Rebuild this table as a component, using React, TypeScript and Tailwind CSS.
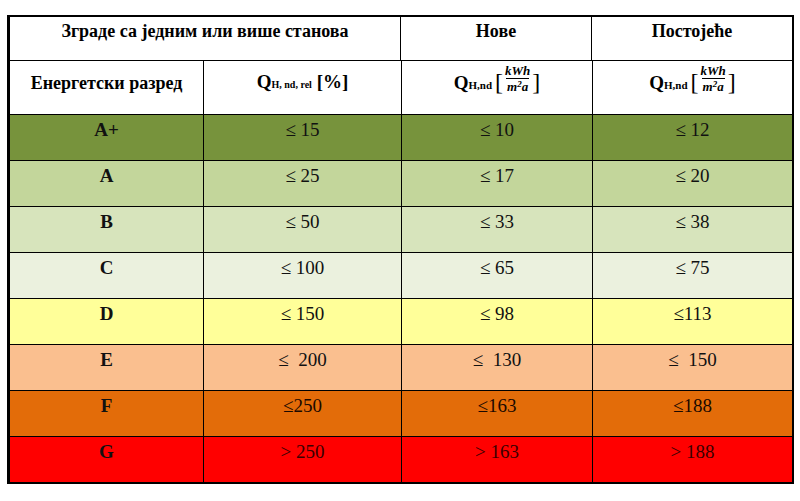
import React from "react";

const serif = { fontFamily: '"Liberation Serif", "Times New Roman", Tinos, serif' };

type Row = { cls: string; label: string; vals: string[]; bg: string; text: string };

const rows: Row[] = [
  { cls: "A+", label: "A+", vals: ["≤ 15", "≤ 10", "≤ 12"], bg: "bg-[#77933c]", text: "text-[#111]" },
  { cls: "A", label: "A", vals: ["≤ 25", "≤ 17", "≤ 20"], bg: "bg-[#c3d69b]", text: "text-[#111]" },
  { cls: "B", label: "B", vals: ["≤ 50", "≤ 33", "≤ 38"], bg: "bg-[#d7e4bc]", text: "text-[#111]" },
  { cls: "C", label: "C", vals: ["≤ 100", "≤ 65", "≤ 75"], bg: "bg-[#ebf1de]", text: "text-[#111]" },
  { cls: "D", label: "D", vals: ["≤ 150", "≤ 98", "≤113"], bg: "bg-[#ffff99]", text: "text-[#111]" },
  { cls: "E", label: "E", vals: ["≤  200", "≤  130", "≤  150"], bg: "bg-[#fabf8f]", text: "text-[#111]" },
  { cls: "F", label: "F", vals: ["≤250", "≤163", "≤188"], bg: "bg-[#e36c09]", text: "text-[#1a0800]" },
  { cls: "G", label: "G", vals: ["> 250", "> 163", "> 188"], bg: "bg-[#ff0000]", text: "text-[#3a0000]" },
];

function QUnit() {
  return (
    <span className="inline-flex items-end self-start leading-none" style={serif}>
      <span className="font-bold text-[19px] leading-none mb-[1px]">
        Q<span className="text-[11px]">H,nd</span>
      </span>
      <span className="ml-[3px] text-[24px] leading-none mb-[-1px]">[</span>
      <span className="inline-flex flex-col items-center italic font-bold text-[13px] leading-none mx-[1px]">
        <span className="px-[1px] pb-[1px]">kWh</span>
        <span className="px-[1px] pt-[1px] border-t border-black">
          m<span className="text-[9px] align-top">2</span>a
        </span>
      </span>
      <span className="text-[24px] leading-none mb-[-1px]">]</span>
    </span>
  );
}

export default function App() {
  return (
    <div className="w-[800px] h-[501px] bg-white overflow-hidden pt-[15px] pl-[7px]" style={serif}>
      <div className="w-[787px] border-t-2 border-b-2 border-l-[3px] border-r-2 border-black text-black">
        {/* header row 1 */}
        <div className="flex h-[43px]">
          <div className="w-[391px] border-r border-black flex justify-center pt-[1px] font-bold text-[18px]" style={serif}>
            Зграде са једним или више станова
          </div>
          <div className="w-[191px] border-r border-black flex justify-center pt-[1px] font-bold text-[18px]" style={serif}>
            Нове
          </div>
          <div className="flex-1 flex justify-center pt-[1px] font-bold text-[18px]" style={serif}>
            Постојеће
          </div>
        </div>
        {/* header row 2 */}
        <div className="flex h-[54px] border-t border-black">
          <div className="w-[194px] border-r border-black flex justify-center pt-[9px] font-bold text-[18px]" style={serif}>
            Енергетски разред
          </div>
          <div className="w-[198px] border-r border-black flex justify-center items-start pt-[11px]">
            <span className="font-bold text-[19px] leading-none" style={serif}>
              Q<span className="text-[10px]">H, nd, rel</span> [%]
            </span>
          </div>
          <div className="w-[191px] border-r border-black flex justify-center items-start pt-[3px]">
            <QUnit />
          </div>
          <div className="flex-1 flex justify-center items-start pt-[3px]">
            <QUnit />
          </div>
        </div>
        {rows.map((r) => (
          <div key={r.cls} className={`flex h-[46px] border-t border-black ${r.bg}`}>
            <div className="w-[194px] border-r border-black flex justify-center pt-[1px] font-bold text-[19px] text-[#111]">
              {r.label}
            </div>
            <div className={`w-[198px] border-r border-black flex justify-center pt-[1px] text-[19px] whitespace-pre ${r.text}`}>
              {r.vals[0]}
            </div>
            <div className={`w-[191px] border-r border-black flex justify-center pt-[1px] text-[19px] whitespace-pre ${r.text}`}>
              {r.vals[1]}
            </div>
            <div className={`flex-1 flex justify-center pt-[1px] text-[19px] whitespace-pre ${r.text}`}>
              {r.vals[2]}
            </div>
          </div>
        ))}
      </div>
    </div>
  );
}
